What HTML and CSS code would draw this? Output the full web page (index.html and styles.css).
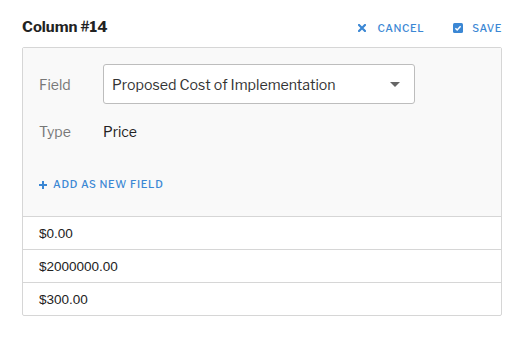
FILE: index.html
```html
<!DOCTYPE html>
<html>
<head>
<meta charset="utf-8">
<link rel="stylesheet" href="styles.css">
</head>
<body>
<div class="wrap">
  <div class="header">
    <h1 class="title">Column #14</h1>
    <div class="actions">
      <a class="action cancel">
        <svg class="ico" width="8" height="8" viewBox="0 0 8 8"><path d="M1 1L7 7M7 1L1 7" stroke="#3b87d4" stroke-width="2.2" stroke-linecap="square"/></svg>
        <span>CANCEL</span>
      </a>
      <a class="action save">
        <svg class="ico" width="10" height="10" viewBox="0 0 10 10"><rect x="0" y="0" width="10" height="10" rx="1.5" fill="#3b87d4"/><path d="M2.4 5.2L4.2 7L7.6 3.3" stroke="#fff" stroke-width="1.5" fill="none"/></svg>
        <span>SAVE</span>
      </a>
    </div>
  </div>
  <div class="card">
    <div class="settings">
      <div class="row">
        <span class="label">Field</span>
        <div class="select">
          <span>Proposed Cost of Implementation</span>
          <span class="caret"></span>
        </div>
      </div>
      <div class="row type-row">
        <span class="label">Type</span>
        <span class="value">Price</span>
      </div>
      <a class="add">
        <svg width="8" height="8" viewBox="0 0 8 8"><path d="M4 0V8M0 4H8" stroke="#3b87d4" stroke-width="2"/></svg>
        <span>ADD AS NEW FIELD</span>
      </a>
    </div>
    <div class="cell">$0.00</div>
    <div class="cell">$2000000.00</div>
    <div class="cell">$300.00</div>
  </div>
</div>
</body>
</html>
```
FILE: styles.css
```css
* { box-sizing: border-box; }
body {
  margin: 0;
  background: #fff;
  font-family: "Libre Franklin", Roboto, "Liberation Sans", sans-serif;
  color: #333;
}
.wrap {
  width: 480px;
  margin-left: 22px;
  padding-top: 17px;
}
.header {
  display: flex;
  align-items: center;
  justify-content: space-between;
  height: 20px;
  margin-bottom: 10px;
}
.title {
  margin: 0;
  font-size: 15px;
  font-weight: 700;
  color: #222;
}
.actions {
  display: flex;
  gap: 29px;
  margin-top: 2px;
}
.action {
  display: flex;
  align-items: center;
  color: #3b87d4;
  font-size: 10.4px;
  letter-spacing: 0.6px;
  font-weight: 500;
}
.cancel { gap: 12px; }
.save { gap: 9px; }
.ico { display: block; }
.card {
  border: 1px solid #d6d6d6;
  border-radius: 2px;
}
.settings {
  background: #f9f9f9;
  padding: 16px 16px 0 16px;
  height: 168px;
}
.row {
  display: flex;
  align-items: center;
}
.label {
  width: 64px;
  font-size: 14px;
  color: #777;
}
.select {
  width: 312px;
  height: 40px;
  border: 1px solid #bdbdbd;
  border-radius: 3px;
  background: #fff;
  display: flex;
  align-items: center;
  justify-content: space-between;
  padding: 0 14px 0 8px;
  font-size: 14.2px;
  color: #333;
}
.caret {
  width: 0;
  height: 0;
  border-left: 5px solid transparent;
  border-right: 5px solid transparent;
  border-top: 5px solid #666;
}
.type-row {
  margin-top: 19px;
}
.value {
  font-size: 14px;
  color: #222;
}
.add {
  display: flex;
  align-items: center;
  gap: 6px;
  margin-top: 38px;
  color: #3b87d4;
  font-size: 10.4px;
  letter-spacing: 0.7px;
  font-weight: 500;
}
.add svg { display: block; }
.cell {
  height: 33px;
  border-top: 1px solid #d6d6d6;
  padding-left: 16px;
  display: flex;
  align-items: center;
  font-family: "Liberation Sans", Arial, sans-serif;
  font-size: 13.5px;
  color: #222;
}
```
